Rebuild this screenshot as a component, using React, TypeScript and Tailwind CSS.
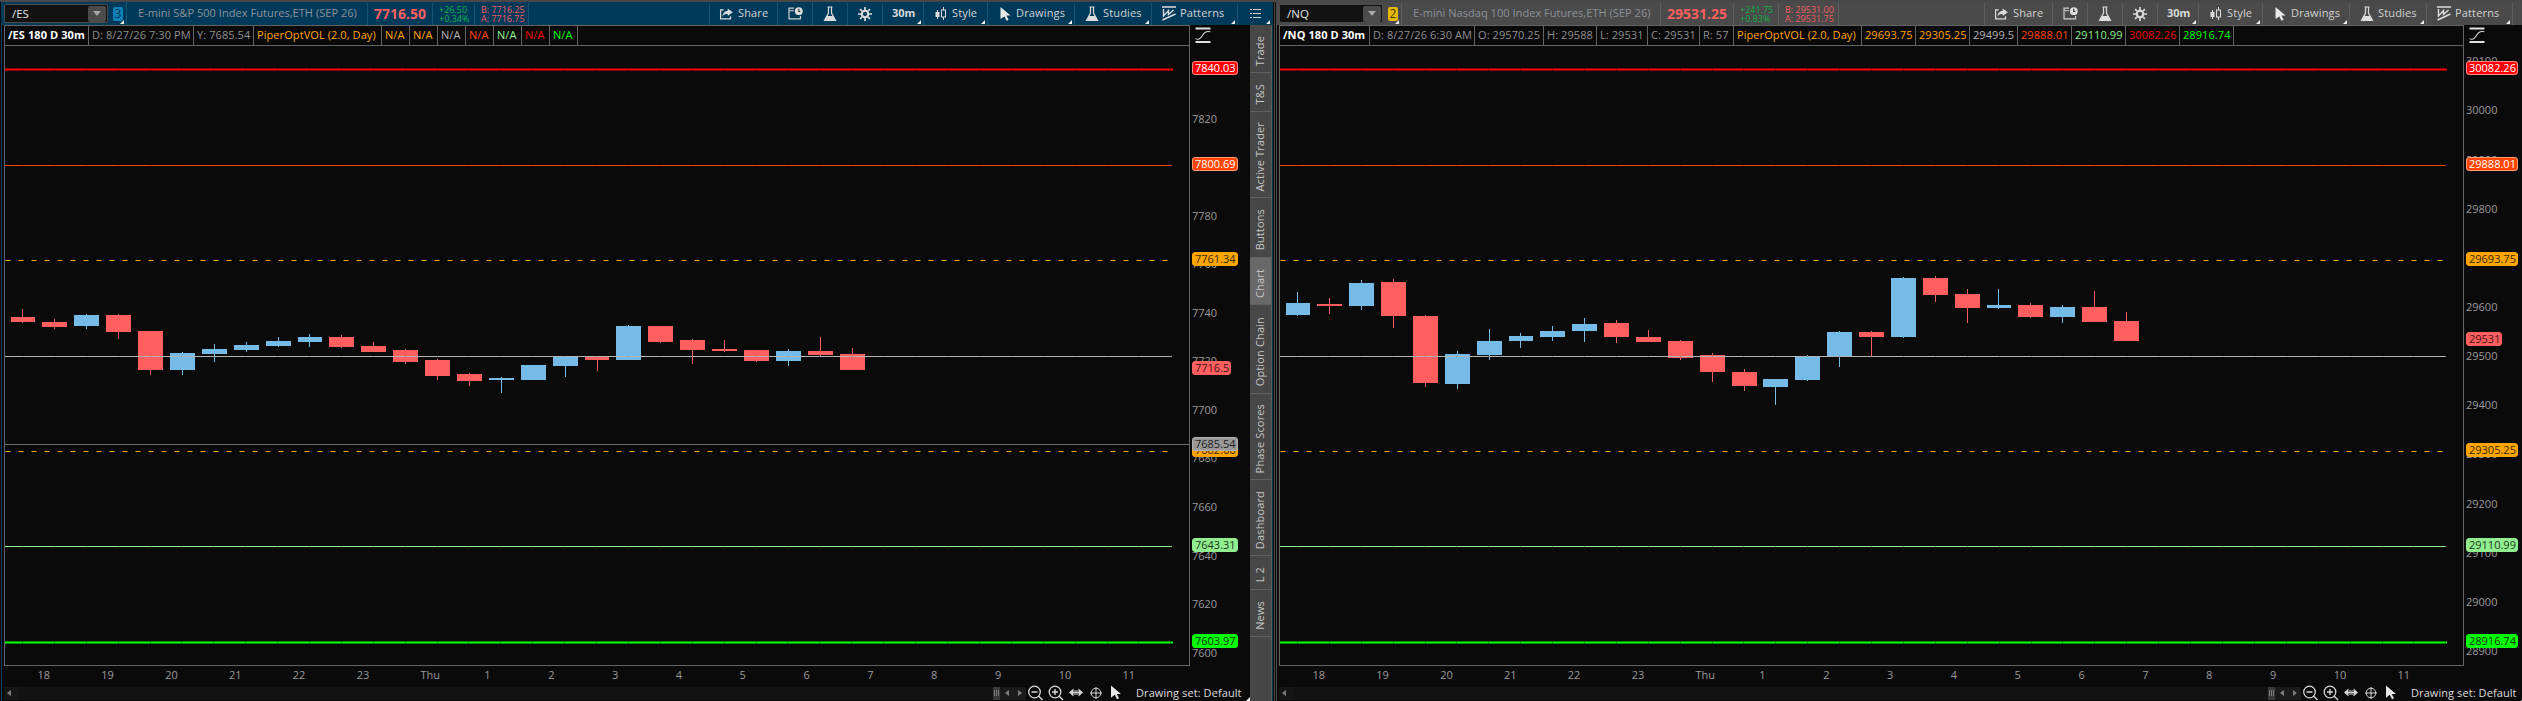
import type { ReactNode } from 'react';

// [x, top, bottom, high, low, up, narrow left shift]
type Candle = [number, number, number, number, number, 0 | 1, number?];

type Level = { y: number; price: string; color: string; text: string; border: string; kind: 'thick' | 'thin' | 'dash' | 'none' | 'cross' };

type PanelData = {
  symbol: string;
  badge: string;
  badgeClass: string;
  headClass: string;
  sepClass: string;
  title: string;
  titleWidth: string;
  last: string;
  lastWidth: string;
  change: [string, string];
  changeWidth: string;
  quote: [string, string];
  quoteWidth: string;
  cells: [string, number, string][];
  plotWidth: number;
  candles: Candle[];
  ticks: [string, number][];
  levels: Level[];
};

const RED = '#ff0000';
const ORANGE_RED = '#ff4500';
const ORANGE = '#ffa500';
const GREEN = '#90ee90';
const LIME = '#00ff00';

const esCandles: Candle[] = [
  [22, 317, 322, 309, 323, 0, 11],
  [54, 322, 327, 319, 329, 0],
  [86, 315, 326, 314, 329, 1],
  [118, 315, 332, 314, 339, 0],
  [150, 331, 370, 331, 375, 0],
  [182, 353, 370, 352, 375, 1],
  [214, 349, 354, 344, 362, 1],
  [246, 345, 350, 342, 352, 1],
  [278, 341, 346, 337, 347, 1],
  [309, 337, 342, 334, 347, 1, 11],
  [341, 337, 347, 335, 348, 0],
  [373, 346, 352, 342, 352, 0],
  [405, 350, 362, 349, 364, 0],
  [437, 360, 376, 359, 380, 0],
  [469, 374, 381, 373, 386, 0],
  [501, 378, 380, 377, 393, 1],
  [533, 365, 380, 365, 380, 1],
  [565, 357, 366, 356, 377, 1],
  [597, 357, 360, 357, 371, 0, 12],
  [628, 326, 360, 325, 360, 1],
  [660, 326, 342, 326, 343, 0],
  [692, 340, 350, 339, 364, 0],
  [724, 349, 351, 340, 352, 0],
  [756, 350, 361, 350, 362, 0],
  [788, 351, 361, 349, 366, 1],
  [820, 351, 355, 337, 356, 0],
  [852, 354, 370, 348, 370, 0],
];

const nqCandles: Candle[] = [
  [22, 303, 315, 292, 316, 1, 11],
  [54, 304, 306, 298, 314, 0],
  [86, 283, 306, 280, 310, 1],
  [118, 282, 316, 279, 328, 0],
  [150, 316, 383, 315, 387, 0],
  [182, 354, 384, 351, 389, 1],
  [214, 341, 355, 329, 360, 1],
  [245, 336, 341, 333, 348, 1, 11],
  [277, 331, 337, 326, 341, 1],
  [309, 324, 331, 318, 342, 1],
  [341, 323, 337, 320, 343, 0],
  [373, 337, 342, 330, 342, 0],
  [405, 341, 358, 340, 360, 0],
  [437, 355, 372, 353, 382, 0],
  [469, 372, 386, 369, 391, 0],
  [500, 379, 387, 379, 405, 1],
  [532, 357, 380, 355, 381, 1],
  [564, 332, 356, 331, 367, 1],
  [596, 332, 337, 331, 356, 0],
  [628, 278, 337, 277, 338, 1],
  [660, 278, 295, 276, 302, 0],
  [692, 294, 308, 289, 323, 0],
  [723, 305, 308, 289, 309, 1, 11],
  [755, 305, 317, 303, 318, 0],
  [787, 307, 317, 305, 323, 1],
  [819, 307, 322, 291, 322, 0],
  [851, 321, 341, 312, 341, 0],
];

const es: PanelData = {
  symbol: '/ES',
  badge: '3',
  badgeClass: 'bg-[#0f82bb] text-[#00334f]',
  headClass: 'bg-[#003a5b]',
  sepClass: 'border-[#1c5375]',
  title: 'E-mini S&P 500 Index Futures,ETH (SEP 26)',
  titleWidth: 'w-[241px]',
  last: '7716.50',
  lastWidth: 'w-[65px]',
  change: ['+26.50', '+0.34%'],
  changeWidth: 'w-[42px]',
  quote: ['B: 7716.25', 'A: 7716.75'],
  quoteWidth: 'w-[55px]',
  cells: [
    ['/ES 180 D 30m', 84, '#ffffff'],
    ['D: 8/27/26 7:30 PM', 105, '#8f8f8f'],
    ['Y: 7685.54', 60, '#8f8f8f'],
    ['PiperOptVOL (2.0, Day)', 128, ORANGE],
    ['N/A', 28, ORANGE],
    ['N/A', 28, ORANGE],
    ['N/A', 28, '#b4b4b4'],
    ['N/A', 28, ORANGE_RED],
    ['N/A', 28, GREEN],
    ['N/A', 28, '#ee0000'],
    ['N/A', 28, LIME],
  ],
  plotWidth: 1184,
  candles: esCandles,
  ticks: [
    ['7820', 119], ['7800', 167], ['7780', 216], ['7760', 264], ['7740', 313], ['7720', 361], ['7700', 410],
    ['7680', 458], ['7660', 507], ['7640', 556], ['7620', 604], ['7600', 653],
  ],
  levels: [
    { y: 69, price: '7840.03', color: RED, text: '#ffffff', border: '#ff8a8a', kind: 'thick' },
    { y: 165, price: '7800.69', color: ORANGE_RED, text: '#ffffff', border: '#ff9a78', kind: 'thin' },
    { y: 260, price: '7761.34', color: ORANGE, text: '#3a2a00', border: '#ffa500', kind: 'dash' },
    { y: 369, price: '7716.5', color: '#ff5f5f', text: '#4a1212', border: '#ff5f5f', kind: 'none' },
    { y: 451, price: '7682.66', color: ORANGE, text: '#3a2a00', border: '#ffa500', kind: 'dash' },
    { y: 445, price: '7685.54', color: '#999999', text: '#1c1c1c', border: '#b0b0b0', kind: 'cross' },
    { y: 546, price: '7643.31', color: GREEN, text: '#1d3a1d', border: '#90ee90', kind: 'thin' },
    { y: 642, price: '7603.97', color: LIME, text: '#003a00', border: '#00ff00', kind: 'thick' },
  ],
};

const nq: PanelData = {
  symbol: '/NQ',
  badge: '2',
  badgeClass: 'bg-[#e6b800] text-[#4a3b00]',
  headClass: 'bg-[#4a4a4a]',
  sepClass: 'border-[#5e5e5e]',
  title: 'E-mini Nasdaq 100 Index Futures,ETH (SEP 26)',
  titleWidth: 'w-[259px]',
  last: '29531.25',
  lastWidth: 'w-[73px]',
  change: ['+241.75', '+0.83%'],
  changeWidth: 'w-[45px]',
  quote: ['B: 29531.00', 'A: 29531.75'],
  quoteWidth: 'w-[61px]',
  cells: [
    ['/NQ 180 D 30m', 90, '#ffffff'],
    ['D: 8/27/26 6:30 AM', 105, '#8f8f8f'],
    ['O: 29570.25', 69, '#8f8f8f'],
    ['H: 29588', 53, '#8f8f8f'],
    ['L: 29531', 51, '#8f8f8f'],
    ['C: 29531', 52, '#8f8f8f'],
    ['R: 57', 34, '#8f8f8f'],
    ['PiperOptVOL (2.0, Day)', 128, ORANGE],
    ['29693.75', 54, ORANGE],
    ['29305.25', 54, ORANGE],
    ['29499.5', 48, '#b4b4b4'],
    ['29888.01', 54, ORANGE_RED],
    ['29110.99', 54, GREEN],
    ['30082.26', 54, '#ee0000'],
    ['28916.74', 54, LIME],
  ],
  plotWidth: 1183,
  candles: nqCandles,
  ticks: [
    ['30100', 61], ['30000', 110], ['29900', 160], ['29800', 209], ['29600', 307], ['29500', 356],
    ['29400', 405], ['29300', 454], ['29200', 504], ['29100', 553], ['29000', 602], ['28900', 651],
  ],
  levels: [
    { y: 69, price: '30082.26', color: RED, text: '#ffffff', border: '#ff8a8a', kind: 'thick' },
    { y: 165, price: '29888.01', color: ORANGE_RED, text: '#ffffff', border: '#ff9a78', kind: 'thin' },
    { y: 260, price: '29693.75', color: ORANGE, text: '#3a2a00', border: '#ffa500', kind: 'dash' },
    { y: 340, price: '29531', color: '#ff5f5f', text: '#4a1212', border: '#ff5f5f', kind: 'none' },
    { y: 451, price: '29305.25', color: ORANGE, text: '#3a2a00', border: '#ffa500', kind: 'dash' },
    { y: 546, price: '29110.99', color: GREEN, text: '#1d3a1d', border: '#90ee90', kind: 'thin' },
    { y: 642, price: '28916.74', color: LIME, text: '#003a00', border: '#00ff00', kind: 'thick' },
  ],
};

const times = ['18', '19', '20', '21', '22', '23', 'Thu', '1', '2', '3', '4', '5', '6', '7', '8', '9', '10', '11'];

const tabs: [string, string][] = [
  ['Trade', 'h-[48px]'],
  ['T&S', 'h-[39px]'],
  ['Active Trader', 'h-[86px]'],
  ['Buttons', 'h-[60px]'],
  ['Chart', 'h-[47px]'],
  ['Option Chain', 'h-[89px]'],
  ['Phase Scores', 'h-[86px]'],
  ['Dashboard', 'h-[76px]'],
  ['L 2', 'h-[34px]'],
  ['News', 'h-[47px]'],
];

function ShareIcon() {
  return (
    <svg width="15" height="14" viewBox="0 0 16 14" fill="none">
      <path d="M5 2.5H1.7v9.8h10.6V9.5" stroke="#dcdcdc" strokeWidth="1.3" />
      <path d="M9.3 1l5.4 4.1-5.4 4.1V6.7C6.6 6.7 5 7.5 3.6 9.8 3.9 5.8 6.2 3.7 9.3 3.4z" fill="#dcdcdc" />
    </svg>
  );
}

function CalendarIcon() {
  return (
    <svg width="15" height="13" viewBox="0 0 15 13" fill="none">
      <path d="M6 1.2H1v10.6h11.5V9" stroke="#d0d0d0" strokeWidth="1.2" />
      <path d="M1 3.7h5" stroke="#d0d0d0" />
      <circle cx="10.8" cy="4.2" r="3.9" fill="#dcdcdc" />
      <path d="M10.8 1.8v2.7h1.5" stroke="#303030" strokeWidth="1.1" />
    </svg>
  );
}

function FlaskIcon() {
  return (
    <svg width="14" height="16" viewBox="0 0 14 16" fill="none">
      <path d="M4.5 1h5M5.5 1v6L1.5 14.5h11L8.5 7V1" stroke="#dcdcdc" strokeWidth="1.2" />
      <path d="M4 10h6l2.5 4.7h-11z" fill="#dcdcdc" />
    </svg>
  );
}

function GearIcon() {
  return (
    <svg width="14" height="14" viewBox="0 0 14 14" fill="none">
      <path d="M7 0v3M7 11v3M0 7h3M11 7h3M2.1 2.1l2 2M9.9 9.9l2 2M11.9 2.1l-2 2M4.1 9.9l-2 2" stroke="#dcdcdc" strokeWidth="1.7" />
      <circle cx="7" cy="7" r="3.2" stroke="#dcdcdc" strokeWidth="2.1" />
    </svg>
  );
}

function StyleIcon() {
  return (
    <svg width="12" height="14" viewBox="0 0 12 14" fill="none">
      <path d="M2.5 3v9M8.5 0v3M8.5 10v3" stroke="#dcdcdc" />
      <rect x="0.5" y="5" width="4" height="5" fill="#dcdcdc" />
      <rect x="6.5" y="3" width="4" height="7" stroke="#dcdcdc" />
    </svg>
  );
}

function CursorIcon() {
  return (
    <svg width="11" height="14" viewBox="0 0 11 14">
      <path d="M0.5 0l10 8.5H6.4l2.2 4.3-2 1-2.2-4.4L0.5 12z" fill="#e8e8e8" />
    </svg>
  );
}

function PatternsIcon() {
  return (
    <svg width="14" height="15" viewBox="0 0 14 15" fill="none">
      <path d="M0 1h14" stroke="#dcdcdc" strokeWidth="1.5" />
      <path d="M1.5 3v7l5-5.5v4l5-4.5M0.5 14l13-6" stroke="#dcdcdc" strokeWidth="1.4" />
    </svg>
  );
}

function ListIcon() {
  return (
    <svg width="11" height="11" viewBox="0 0 11 11" shapeRendering="crispEdges">
      <path d="M0 1.5h2M3 1.5h8M0 5.5h2M3 5.5h8M0 9.5h2M3 9.5h8" stroke="#d0d0d0" />
    </svg>
  );
}

function Corner() {
  return (
    <svg className="absolute right-[2px] bottom-[1px]" width="4" height="4" viewBox="0 0 4 4">
      <path d="M4 0v4H0z" fill="#f0f0f0" />
    </svg>
  );
}

function Tool({ width, sep, pad, corner, icon, label }: { width: string; sep: string; pad?: string; corner?: boolean; icon?: ReactNode; label?: string }) {
  return (
    <div className={`relative flex h-[22px] shrink-0 items-center border-l ${width} ${sep} ${label ? '' : 'justify-center'} ${pad ?? ''}`}>
      {icon}
      {label && <span className={`text-[11px] ${icon ? 'tracking-[0.15px] text-[#d2d2d2]' : 'font-bold text-[#d8d8d8]'}`}>{label}</span>}
      {corner && <Corner />}
    </div>
  );
}

function Header({ data }: { data: PanelData }) {
  const sep = data.sepClass;
  return (
    <div className={`flex h-[23px] w-[1271px] shrink-0 items-center pr-px pl-[2px] whitespace-nowrap ${data.headClass}`}>
      <div className="flex h-[19px] w-[104px] items-center justify-between rounded-[2px] border border-[#4c4c4c] bg-[#121212] pr-px pl-[7px]">
        <span className="text-[11.5px] text-[#e4e4e4]">{data.symbol}</span>
        <span className="flex h-[16px] w-[18px] items-center justify-center rounded-[2px] bg-[#4b4b4b]">
          <svg width="8" height="5" viewBox="0 0 8 5"><path d="M0 0h8L4 5z" fill="#a8a8a8" /></svg>
        </span>
      </div>
      <div className="relative flex h-[22px] w-[18px] items-center pl-[5px]">
        <span className={`flex h-[14px] w-[10px] items-center justify-center rounded-[2px] text-[12px] ${data.badgeClass}`}>{data.badge}</span>
        <Corner />
      </div>
      <div className={`flex h-[22px] items-center border-l pl-[11px] text-[11px] tracking-[0.04px] text-[#8d9299] ${sep} ${data.titleWidth}`}>{data.title}</div>
      <div className={`flex h-[22px] items-center border-l pl-[6px] text-[14px] font-bold text-[#ff5f5f] ${sep} ${data.lastWidth}`}>{data.last}</div>
      <div className={`flex h-[22px] flex-col justify-center border-l pl-[6px] text-[9px] leading-[9px] text-[#12b04a] ${sep} ${data.changeWidth}`}>
        <span>{data.change[0]}</span>
        <span>{data.change[1]}</span>
      </div>
      <div className={`flex h-[22px] flex-col justify-center border-x pl-[6px] text-[9px] leading-[9px] text-[#ef5d62] ${sep} ${data.quoteWidth}`}>
        <span>{data.quote[0]}</span>
        <span>{data.quote[1]}</span>
      </div>
      <div className="flex-1" />
      <Tool width="w-[68px]" sep={sep} pad="pl-[9px] gap-[4px]" icon={<ShareIcon />} label="Share" />
      <Tool width="w-[35px]" sep={sep} icon={<CalendarIcon />} />
      <Tool width="w-[35px]" sep={sep} pad="pr-px" icon={<FlaskIcon />} />
      <Tool width="w-[35px]" sep={sep} pad="pr-px" icon={<GearIcon />} />
      <Tool width="w-[41px]" sep={sep} pad="pl-[9px]" label="30m" corner />
      <Tool width="w-[64px]" sep={sep} pad="pl-[11px] gap-[5px]" icon={<StyleIcon />} label="Style" corner />
      <Tool width="w-[87px]" sep={sep} pad="pl-[12px] gap-[5px]" icon={<CursorIcon />} label="Drawings" corner />
      <Tool width="w-[77px]" sep={sep} pad="pl-[10px] gap-[4px]" icon={<FlaskIcon />} label="Studies" corner />
      <Tool width="w-[86px]" sep={sep} pad="pl-[10px] gap-[4px]" icon={<PatternsIcon />} label="Patterns" corner />
      <Tool width="w-[35px]" sep={sep} icon={<ListIcon />} corner />
    </div>
  );
}

function InfoRow({ cells }: { cells: PanelData['cells'] }) {
  return (
    <div className="flex h-[20px] shrink-0 border-b border-[#646464] text-[11px] tracking-[0.08px]">
      {cells.map(([text, width, color], i) => (
        <div
          key={i}
          className={`flex shrink-0 items-center border-r border-[#646464] pl-[3px] whitespace-nowrap ${i === 0 ? 'font-bold' : ''}`}
          style={{ width, color }}
        >
          {text}
        </div>
      ))}
    </div>
  );
}

function Plot({ data }: { data: PanelData }) {
  const end = data.plotWidth - 17;
  const marks = Array.from({ length: 37 }, (_, i) => Math.floor(22.4 + i * 31.9));
  return (
    <svg className="block shrink-0" width={data.plotWidth} height="619" viewBox={`5 46 ${data.plotWidth} 619`} shapeRendering="crispEdges">
      {data.candles.map(([x, top, bottom, high, low, up, shift]) => (
        <g key={x} fill={up ? '#74bbe8' : '#ff5f5f'}>
          <rect x={x} y={high} width="1" height={low - high} />
          <rect x={x - (shift ?? 12)} y={top} width={shift ? 24 : 25} height={bottom - top} />
        </g>
      ))}
      <rect x="5" y="356" width={end} height="1" fill="#b4b4b4" />
      {data.levels.map((l) => {
        if (l.kind === 'none') return null;
        if (l.kind === 'cross') return <rect key={l.y} x="5" y="444" width={data.plotWidth} height="1" fill="#6c6c6c" />;
        if (l.kind === 'thin') return <rect key={l.y} x="5" y={l.y} width={end} height="1" fill={l.color} />;
        if (l.kind === 'dash') {
          return (
            <g key={l.y} stroke={l.color}>
              <path d={`M5 ${l.y + 0.5}H${end + 2}`} strokeDasharray="6 7" opacity="0.5" />
              <path d={`M5 ${l.y + 0.5}H${end + 2}`} strokeDasharray="4 9" strokeDashoffset="-1" />
            </g>
          );
        }
        return (
          <g key={l.y} fill={l.color}>
            <rect x="5" y={l.y - 1} width={end + 1} height="3" opacity="0.55" />
            <rect x="5" y={l.y} width={end + 1} height="1" />
          </g>
        );
      })}
      {marks.map((x) => (
        <path key={x} d={`M${x + 0.5} 68v3M${x + 0.5} 165v1M${x + 0.5} 356v1M${x + 0.5} 546v1M${x + 0.5} 641v3`} stroke="#0a0a0a" opacity="0.25" />
      ))}
    </svg>
  );
}

function PriceAxis({ data }: { data: PanelData }) {
  return (
    <div className="relative h-[641px] w-[60px] shrink-0 text-[11px] leading-[14px]">
      <svg className="absolute top-[2px] left-[5px]" width="16" height="16" viewBox="0 0 16 16" fill="none">
        <path d="M0.5 1.5h15M0.5 15h15" stroke="#e0e0e0" strokeWidth="1.8" />
        <path d="M0.5 11.6C2.8 13 5.4 12.4 7.4 8.6S11.600 3.700 15.300 4.800" stroke="#d8d8d8" strokeWidth="1.1" />
      </svg>
      {data.ticks.map(([label, y]) => (
        <span key={label} className="absolute left-[2px] text-[#9a9a9a]" style={{ top: y - 32 }}>{label}</span>
      ))}
      {data.levels.map((l) => (
        <span
          key={l.price}
          className="absolute left-[2px] h-[14px] rounded-[3px] border pr-px pl-[2px] leading-[12px]"
          style={{ top: l.y - 33, background: l.color, color: l.text, borderColor: l.border }}
        >
          {l.price}
        </span>
      ))}
    </div>
  );
}

function TimeAxis() {
  return (
    <div className="flex h-[19px] shrink-0 items-center pl-[33.5px] text-[11px] text-[#9a9a9a]">
      {times.map((t) => (
        <span key={t} className="w-[63.84px] shrink-0">{t}</span>
      ))}
    </div>
  );
}

function BottomBar() {
  return (
    <div className="relative flex h-[16px] w-[1246px] shrink-0 items-center">
      <div className="flex h-[13px] w-[14px] items-center bg-[#161616] pl-[3px]">
        <svg width="4" height="6" viewBox="0 0 4 6"><path d="M4 0v6L0 3z" fill="#7d7d7d" /></svg>
      </div>
      <div className="h-[13px] w-[975px] bg-[#121212]" />
      <div className="flex h-[13px] w-[7px] items-center justify-center gap-px bg-[#3a3a3a]">
        <i className="h-[6px] w-px bg-[#777]" />
        <i className="h-[6px] w-px bg-[#777]" />
        <i className="h-[6px] w-px bg-[#777]" />
      </div>
      <div className="flex h-[13px] w-[13px] items-center justify-center bg-[#1b1b1b]">
        <svg width="4" height="6" viewBox="0 0 4 6"><path d="M4 0v6L0 3z" fill="#7d7d7d" /></svg>
      </div>
      <div className="flex h-[13px] w-[13px] items-center justify-center bg-[#1b1b1b]">
        <svg width="4" height="6" viewBox="0 0 4 6"><path d="M0 0v6L4 3z" fill="#7d7d7d" /></svg>
      </div>
      <svg className="ml-px shrink-0" width="96" height="16" viewBox="0 0 96 16" fill="none" stroke="#d8d8d8">
        <circle cx="7.5" cy="7" r="5.8" strokeWidth="1.3" />
        <path d="M4.5 7h6M11.5 11l4 4" strokeWidth="1.4" />
        <circle cx="28" cy="7" r="5.8" strokeWidth="1.3" />
        <path d="M25 7h6M28 4v6M32 11l4 4" strokeWidth="1.4" />
        <path d="M42 7.5l4.5-4v8zM56 7.5l-4.5-4v8z" fill="#d8d8d8" stroke="none" />
        <path d="M46 7.5h6M48 5v5M50 5v5" />
        <circle cx="69" cy="8" r="4.8" />
        <path d="M63 8h12M69 2v12" />
        <path d="M84 0.5l10 8.5h-4.2l2.2 4.2-2 1-2.200-4.400-3.800 2.900z" fill="#e8e8e8" stroke="none" />
      </svg>
      <span className="ml-[13px] text-[11px] tracking-[0.08px] whitespace-nowrap text-[#dcdcdc]">Drawing set: Default</span>
      <svg className="absolute right-0 bottom-0" width="4" height="4" viewBox="0 0 4 4"><path d="M4 0v4H0z" fill="#f0f0f0" /></svg>
    </div>
  );
}

function SideTabs() {
  return (
    <div className="flex w-[22px] shrink-0 flex-col border-r border-[#5c5c5c] bg-[#474747]">
      {tabs.map(([name, height]) => (
        <div key={name} className={`flex shrink-0 items-center justify-center border-b border-[#606060] pt-[5px] pr-px ${height} ${name === 'Chart' ? 'bg-[#686868]' : ''}`}>
          <span className="rotate-180 text-[11px] leading-[14px] tracking-[0.15px] whitespace-nowrap text-[#c4c4c4] [writing-mode:vertical-rl]">{name}</span>
        </div>
      ))}
    </div>
  );
}

function ChartPanel({ data, side }: { data: PanelData; side?: boolean }) {
  return (
    <section className={`flex h-[699px] shrink-0 flex-col border-l bg-[#0a0a0a] ${side ? 'w-[1272px] border-[#003a5b]' : 'w-[1246px] overflow-hidden border-[#4a4a4a]'}`}>
      <Header data={data} />
      <div className="flex flex-1">
        <div className="w-[1248px] shrink-0 pl-[2px]">
          <div className="flex h-[641px]">
            <div className="shrink-0 border border-[#646464]">
              <InfoRow cells={data.cells} />
              <Plot data={data} />
            </div>
            <PriceAxis data={data} />
          </div>
          <TimeAxis />
          <BottomBar />
        </div>
        {side && <SideTabs />}
        {side && <div className="w-px shrink-0 bg-[#003a5b]" />}
      </div>
    </section>
  );
}

export default function App() {
  return (
    <div className="h-[701px] w-[2522px] overflow-hidden bg-[#0a0a0a] font-['Open_Sans','Noto_Sans',sans-serif]">
      <div className="h-[2px] bg-[#484848]" />
      <div className="flex pl-px">
        <ChartPanel data={es} side />
        <div className="mx-px w-px bg-[#484848]" />
        <ChartPanel data={nq} />
      </div>
    </div>
  );
}
